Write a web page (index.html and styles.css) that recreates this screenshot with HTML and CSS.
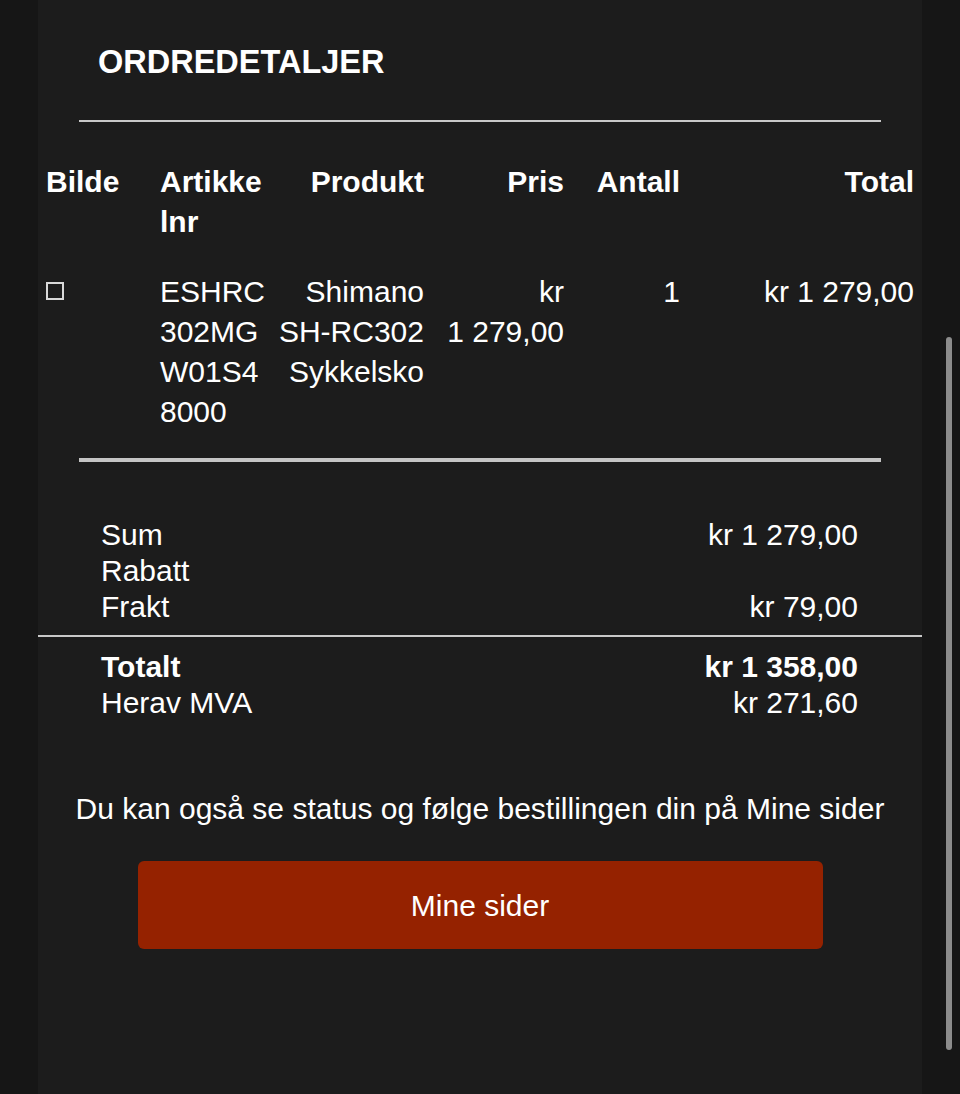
FILE: index.html
```html
<!DOCTYPE html>
<html lang="no">
<head>
    <meta charset="UTF-8">
    <meta name="viewport" content="width=device-width, initial-scale=1.0">
    <title>Ordredetaljer</title>
    <link rel="stylesheet" href="styles.css">
</head>
<body>
    <div class="page">
        <!-- Tittel -->
        <div class="order-head">
            <h2>ORDREDETALJER</h2>
        </div>
        <div class="rule"></div>

        <!-- Varelinjer -->
        <table class="order-lines">
            <thead>
                <tr>
                    <th class="col-img">Bilde</th>
                    <th class="col-sku">Artikkelnr</th>
                    <th class="col-name">Produkt</th>
                    <th class="col-price">Pris</th>
                    <th class="col-qty">Antall</th>
                    <th class="col-total">Total</th>
                </tr>
            </thead>
            <tbody>
                <tr>
                    <td class="col-img"><span class="img-missing"></span></td>
                    <td class="col-sku">ESHRC302MGW01S48000</td>
                    <td class="col-name">Shimano SH-RC302 Sykkelsko</td>
                    <td class="col-price">kr 1&nbsp;279,00</td>
                    <td class="col-qty">1</td>
                    <td class="col-total">kr 1&nbsp;279,00</td>
                </tr>
            </tbody>
        </table>
        <div class="rule thick"></div>

        <!-- Summering -->
        <div class="totals">
            <div class="sum-row"><span>Sum</span><span>kr 1 279,00</span></div>
            <div class="sum-row"><span>Rabatt</span><span></span></div>
            <div class="sum-row"><span>Frakt</span><span>kr 79,00</span></div>
        </div>
        <div class="divider"></div>
        <div class="totals grand">
            <div class="sum-row strong"><span>Totalt</span><span>kr 1 358,00</span></div>
            <div class="sum-row"><span>Herav MVA</span><span>kr 271,60</span></div>
        </div>

        <p class="info">Du kan også se status og følge bestillingen din på Mine sider</p>
        <a class="btn" href="#">Mine sider</a>
    </div>

    <div class="scrollbar"></div>
</body>
</html>
```

FILE: styles.css
```css
body {
    margin: 0;
    background-color: #161616;
    color: #ffffff;
    font-family: "Liberation Sans", Arial, sans-serif;
    font-size: 30px;
}
.page {
    width: 884px;
    min-height: 1094px;
    margin: 0 auto;
    background-color: #1c1c1c;
    overflow: hidden;
}
.order-head {
    padding: 42px 60px 0;
}
.order-head h2 {
    margin: 0;
    font-size: 32.5px;
    line-height: 40px;
    font-weight: bold;
}
.rule {
    margin: 38px 41px 0;
    height: 2px;
    background-color: #c8c8c8;
}
.rule.thick {
    margin-top: 11px;
    height: 4px;
    background-color: #c4c4c4;
}
.order-lines {
    width: 867px;
    margin: 25px 8px 0;
    border-collapse: collapse;
    table-layout: fixed;
}
.order-lines th,
.order-lines td {
    padding: 15px 0;
    line-height: 40px;
    vertical-align: top;
    text-align: right;
}
.order-lines th {
    font-weight: bold;
}
.order-lines .col-img {
    width: 114px;
    text-align: left;
}
.order-lines .col-sku {
    width: 107px;
    text-align: left;
    word-break: break-all;
}
.order-lines .col-name {
    width: 157px;
}
.order-lines .col-price {
    width: 140px;
}
.order-lines .col-qty {
    width: 116px;
}
.order-lines .col-total {
    width: 234px;
}
.img-missing {
    display: block;
    width: 14px;
    height: 14px;
    margin-top: 10px;
    border: 2px solid #d8d8d8;
}
.totals {
    margin-top: 55px;
    padding: 0 64px 0 63px;
}
.totals.grand {
    margin-top: 12px;
}
.sum-row {
    display: flex;
    justify-content: space-between;
    line-height: 36px;
    height: 36px;
}
.sum-row.strong {
    font-weight: bold;
}
.divider {
    margin-top: 10px;
    height: 2px;
    background-color: #c8c8c8;
}
.info {
    margin: 70px 0 0;
    line-height: 36px;
    text-align: center;
}
.btn {
    display: block;
    width: 685px;
    height: 88px;
    margin: 34px auto 0;
    line-height: 90px;
    border-radius: 6px;
    background-color: #952200;
    color: #ffffff;
    text-align: center;
    text-decoration: none;
}
.scrollbar {
    position: fixed;
    top: 337px;
    right: 8px;
    width: 6px;
    height: 713px;
    border-radius: 3px;
    background-color: #8c8c8c;
}
```
